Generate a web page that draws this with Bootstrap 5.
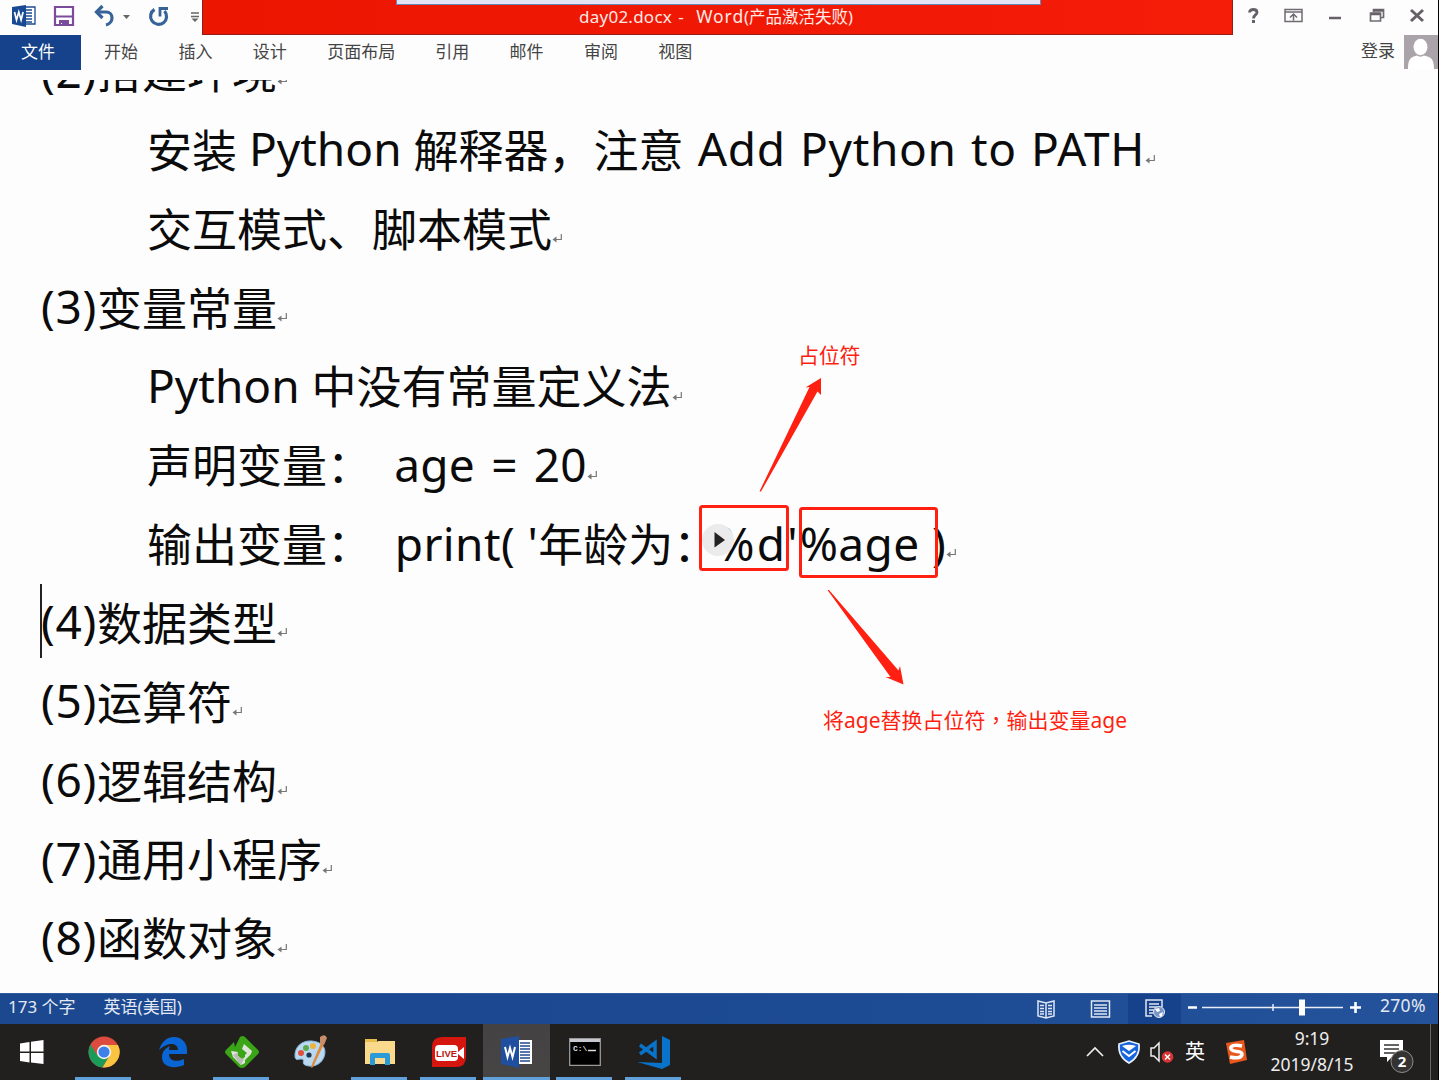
<!DOCTYPE html>
<html lang="zh-CN">
<head>
<meta charset="utf-8">
<title>day02.docx - Word</title>
<link rel="stylesheet" href="https://cdn.jsdelivr.net/npm/bootstrap@5.3.0/dist/css/bootstrap.min.css">
<style>
body{width:1439px;height:1080px;overflow:hidden;background:#fdfdfd;font-family:"Noto Sans","Noto Sans CJK SC",sans-serif;font-size:17px;line-height:1;color:#444}
svg{display:block;flex:none}
.app{width:1439px;height:1080px;border-right:1px solid #000}
.topbar{height:35px}
.quick{width:202px;padding-bottom:4px}
.title-strip{width:1031px;background:linear-gradient(90deg,#eb1500,#f51c08);border:1px solid #8f2017;border-top:0;color:#ffe9e4;font-size:16.5px;padding-top:8px;padding-left:376px;white-space:pre}
.title-strip .fname{font-size:17px;letter-spacing:.25px;word-spacing:1.5px}
.title-strip .appname{font-size:17.5px;letter-spacing:.9px}
.title-strip .share{left:193px;top:0;width:645px;height:5px;background:#e4e4f4;border:1px solid #6b86b8;border-top:0}
.winbtns{padding-left:14px;padding-top:7px}
.ribbon{height:35px}
.file-tab{width:81px;height:35px;background:#15428b;color:#fff;padding:8px 0 0 21px}
.rtab{width:74.4px;padding-top:8px;white-space:nowrap}
.rtab.wide{width:108px}
.tabs{padding-left:23px}
.signin{padding:7px 9px 0 0}
.sheet{height:913px;margin-top:10px;padding-left:41px}
.ln{height:78.85px;line-height:78.85px;white-space:pre;color:#0b0b0b;font-size:45px;display:flex;align-items:center}
.ln.first{margin-top:-47px}
.ln.in{padding-left:106px}
.ln .la,.ln .num{font-size:46px;margin-top:-5px}
.ln .num{width:56px;letter-spacing:.7px}
.ln .mk{margin-top:17px}
.ln .add{letter-spacing:.7px;word-spacing:1.5px}
.ln .assign{margin-left:-10px;letter-spacing:.2px;word-spacing:4px}
.ln .call{margin-left:-2px;letter-spacing:.4px}
.ln .fmt{margin-left:-2px;letter-spacing:2.2px}
.ln .arg{letter-spacing:.4px}
.caret{left:40px;top:584px;width:1.5px;height:74px;background:#222}
.note{color:#ff1f10;font-size:21px;white-space:pre;line-height:24px}
.n1{left:798px;top:343px;letter-spacing:-.3px}.n2{left:823px;top:707px}
.note i{font-style:normal;font-family:"Noto Sans CJK TC",sans-serif}
.status{height:31px;background:linear-gradient(90deg,#1b488f,#1c4a93 60%,#24539b);color:#e4e9f4;border-top:1px solid #315c9d}
.status span{margin-top:-6px}
.status .view-on{width:53px;height:30px;background:#15428b}
.zoomv{width:73px;padding-left:15px;font-size:17.5px;letter-spacing:.3px}
.taskbar{height:56px;background:#22201f}
.tb{width:69px;height:56px;position:relative;display:flex;justify-content:center;align-items:center}
.tb.start{padding-right:6px}
.tb.on::after{content:"";position:absolute;left:6px;right:7px;bottom:0;height:3px;background:#60a1dc}
.tb.act{background:linear-gradient(180deg,#444243,#474544);width:67px}
.tb.act::after{left:0;right:0}
.ime{font-size:20px;margin-left:11px}
.sogou{margin-left:19px}
.clock{line-height:26px;font-size:17.5px;color:#eee;margin:-2px 0 0 22px;width:84px}
.bell{margin:10px 0 0 25px}
.peek{width:1px;height:56px;background:#666;margin-left:15px;margin-right:7px}
</style>
<script src="https://cdn.jsdelivr.net/npm/bootstrap@5.3.0/dist/js/bootstrap.bundle.min.js"></script>
</head>
<body>
<svg width="0" height="0" class="position-absolute"><defs>
<symbol id="ret" viewBox="0 0 11 11"><path d="M9.300 1v5.500H2.500" fill="none" stroke="#777" stroke-width="1.200"/><path d="M0.500 6.500L4.500 3.500V9.500Z" fill="#777"/></symbol>
</defs></svg>
<div class="app d-flex flex-column position-relative">
 <header class="topbar d-flex">
  <div class="quick d-flex align-items-center">
   <svg class="ms-2 ps-1" width="28" height="24" viewBox="0 0 24 24"><path d="M12 3h11v17H12z" fill="#fff" stroke="#1b4a93" stroke-width="1.300"/><path d="M14 6h6M14 9h6M14 12h6M14 15h6M14 18h6" stroke="#1b4a93" stroke-width="1.400"/><path d="M0 3L14 1v22L0 20z" fill="#174a93"/><path d="M2.500 8l2 8 2.300-8 2.300 8 2-8" fill="none" stroke="#fff" stroke-width="1.700"/></svg>
   <svg class="ms-3" width="24" height="22" viewBox="0 0 24 22"><path d="M3 2h18v18H3z" fill="#fff" stroke="#7b4c9b" stroke-width="2.200"/><path d="M3 11.500h18" stroke="#7b4c9b" stroke-width="2"/><path d="M7 15h10v6h-7v-3H9v3H7z" fill="#7b4c9b"/></svg>
   <svg class="ms-3" width="40" height="24" viewBox="0 0 40 24"><path d="M5 8h9c8 0 8 11 0 13" fill="none" stroke="#376399" stroke-width="3.200"/><path d="M10.500 2L4.500 8l6 6" fill="none" stroke="#376399" stroke-width="3.200"/><path d="M31 11h7l-3.500 4z" fill="#666"/></svg>
   <svg class="ms-3" width="22" height="24" viewBox="0 0 22 24"><path d="M6.500 5.500A8 8 0 1 0 16.500 7" fill="none" stroke="#376399" stroke-width="3.200"/><path d="M12 12.500V4.500h8" fill="none" stroke="#376399" stroke-width="2.800"/></svg>
   <svg class="ms-3 ps-1" width="14" height="14" viewBox="0 0 10 14"><path d="M1 4h8M1 7.500h8" stroke="#666" stroke-width="1.300"/><path d="M1.500 9.500h7L5 13z" fill="#666"/></svg>
  </div>
  <div class="title-strip position-relative"><div class="share position-absolute"></div><span class="fname">day02.docx -  </span><span class="appname">Word</span>(产品激活失败)</div>
  <div class="winbtns">
   <svg width="180" height="20" viewBox="0 0 180 20"><path d="M2.500 5.500C2.500 1.500 10 1.500 10 5.500c0 2.500-3.500 2.500-3.500 6" fill="none" stroke="#666168" stroke-width="2.800"/><path d="M5 13h3v3H5z" fill="#666168"/><g fill="none" stroke="#706b72" stroke-width="1.500"><path d="M38 2.500h17v12H38zM38 5h17M46.500 13.500V7.500M43 10.500l3.500-3.500 3.500 3.500"/><path d="M126.500 5V2.500h10v8H134M123.500 6h10v8h-10z" stroke-width="1.700"/></g><path d="M127 3.500h9M124 7h9M82 11h12" stroke="#666168" stroke-width="2.500"/><path d="M164 3l12 11M176 3l-12 11" stroke="#666168" stroke-width="3"/></svg>
  </div>
 </header>
 <nav class="ribbon d-flex">
  <div class="file-tab">文件</div>
  <div class="tabs d-flex"><div class="rtab">开始</div><div class="rtab">插入</div><div class="rtab">设计</div><div class="rtab wide">页面布局</div><div class="rtab">引用</div><div class="rtab">邮件</div><div class="rtab">审阅</div><div class="rtab">视图</div></div>
  <div class="d-flex ms-auto"><span class="signin">登录</span><svg width="34" height="34" viewBox="0 0 34 34"><path d="M0 0h34v34H0z" fill="#aaa3aa"/><ellipse cx="16.500" cy="12" rx="7" ry="8.300" fill="#fff"/><path d="M4 34c0-9 2-12 9-13.500 2 1.500 5 1.500 7 0C28 22 30 25 30 34z" fill="#fff"/></svg></div>
 </nav>
 <main class="sheet overflow-hidden">
  <div class="ln first"><span class="num">(2)</span>搭建环境<svg class="mk" width="11" height="11"><use href="#ret"/></svg></div>
  <div class="ln in">安装<span class="la"> Python </span>解释器，注意<span class="la add"> Add Python to PATH</span><svg class="mk" width="11" height="11"><use href="#ret"/></svg></div>
  <div class="ln in">交互模式、脚本模式<svg class="mk" width="11" height="11"><use href="#ret"/></svg></div>
  <div class="ln"><span class="num">(3)</span>变量常量<svg class="mk" width="11" height="11"><use href="#ret"/></svg></div>
  <div class="ln in"><span class="la">Python </span>中没有常量定义法<svg class="mk" width="11" height="11"><use href="#ret"/></svg></div>
  <div class="ln in">声明变量：<span class="la assign">  age = 20</span><svg class="mk" width="11" height="11"><use href="#ret"/></svg></div>
  <div class="ln in">输出变量：<span class="la call">  print( '</span>年龄为：<span class="la fmt">%d'</span><span class="la arg">%age )</span><svg class="mk" width="11" height="11"><use href="#ret"/></svg></div>
  <div class="ln"><span class="num">(4)</span>数据类型<svg class="mk" width="11" height="11"><use href="#ret"/></svg></div>
  <div class="ln"><span class="num">(5)</span>运算符<svg class="mk" width="11" height="11"><use href="#ret"/></svg></div>
  <div class="ln"><span class="num">(6)</span>逻辑结构<svg class="mk" width="11" height="11"><use href="#ret"/></svg></div>
  <div class="ln"><span class="num">(7)</span>通用小程序<svg class="mk" width="11" height="11"><use href="#ret"/></svg></div>
  <div class="ln"><span class="num">(8)</span>函数对象<svg class="mk" width="11" height="11"><use href="#ret"/></svg></div>
 </main>
 <footer class="status d-flex align-items-center">
  <span class="ps-2">173 个字</span><span class="ms-4 ps-1">英语(美国)</span>
  <div class="d-flex align-items-center ms-auto">
   <svg width="92" height="24" viewBox="0 0 92 24"><g fill="none" stroke="#dfe6f3" stroke-width="1.500"><path d="M2 4l8 2 8-2v15l-8 2-8-2zM10 6v15M4 8.500h4M4 11.500h4M4 14.500h4M4 17h4M12 8.500h4M12 11.500h4M12 14.500h4M12 17h4"/><path d="M55.500 4h18v16h-18zM58 8h13M58 11h13M58 14h13M58 17h13"/></g></svg>
   <div class="view-on d-flex align-items-center justify-content-center"><svg width="22" height="22" viewBox="0 0 22 22"><path d="M8 18H2V2h16v7M5 6h10M5 9h8M5 12h5M5 15h4" fill="none" stroke="#dfe6f3" stroke-width="1.500"/><circle cx="15" cy="14" r="5.500" fill="#7794c4" stroke="#e5ebf5"/><path d="M11 11l4-1 1 3-3 1zM15 16l4-2-1 4-2 1z" fill="#fff"/></svg></div>
   <svg width="184" height="28" viewBox="0 2 184 24"><path d="M7 12.500h9M169 12.500h11M174.500 7v11" stroke="#fff" stroke-width="2.600"/><path d="M21 12.500h141M92 9v7" stroke="#e8edf6" stroke-width="1.500"/><path d="M118 4.500h6v16h-6z" fill="#fff"/></svg>
   <span class="zoomv">270%</span>
  </div>
 </footer>
 <div class="taskbar d-flex">
  <div class="tb start"><svg width="24" height="24" viewBox="0 0 24 24" fill="#fff"><path d="M0 3.500L9.500 2v9.500H0zM11 1.800L23.500 0v11.500H11zM0 13h9.500v9.500L0 21zM11 13h12.500v11L11 22.500z"/></svg></div>
  <div class="tb on"><svg width="32" height="32" viewBox="0 0 32 32"><circle cx="16" cy="16" r="15.500" fill="#dc4b3e"/><path d="M2.500 8.500A15.500 15.500 0 0 0 14.500 31.500L21 20 16 16 9 19z" fill="#1a9c58"/><path d="M16 9h13.900A15.500 15.500 0 0 1 14.500 31.500L22 19z" fill="#f9c440"/><circle cx="16" cy="16" r="7.200" fill="#f3f3f3"/><circle cx="16" cy="16" r="5.600" fill="#3f80e8"/></svg></div>
  <div class="tb"><svg width="30" height="32" viewBox="0 0 30 32"><path d="M1 14C4 5 9 1 16 1c8 0 13 6 13 13v4H11c0 8 9 8 15 5v6c-9 4-22 3-22-8 0-6 4-9 8-11-1 2-1 3-1 4h9c0-7-9-9-19 0z" fill="#0965d4"/></svg></div>
  <div class="tb on"><svg width="34" height="34" viewBox="0 0 34 34"><path d="M17 1q2 0 3 1l13 13q2 2 0 4L20 32q-3 2-6 0L1 19q-2-2 0-4L9 7l1 5 5-10z" fill="#3aa516"/><path d="M6 16l7 1v4l4 3 3-2v6l-4 2-8-8z" fill="#e5e5df"/><path d="M8 20l5-3v4l4 3 3-2-4 8z" fill="#b9beb5"/><path d="M19 9l8 7-1 3-6 6v-5l2-2-5-4z" fill="#dfe4da"/></svg></div>
  <div class="tb"><svg width="34" height="34" viewBox="0 0 34 34"><path d="M1 22C0 12 8 5 18 6c11 1 15 8 12 16-3 8-12 11-19 8-4-2 1-6-4-6-3 0-5 2-6-2z" fill="#b8d9f1" stroke="#88b4dc"/><circle cx="7" cy="18" r="3" fill="#df513f"/><circle cx="12" cy="13" r="3" fill="#5daa4d"/><circle cx="19" cy="11" r="3" fill="#edb33b"/><circle cx="15" cy="20" r="2.600" fill="#20364d"/><path d="M27 8l3 1-11 23-2 1 1-4z" fill="#df8a3c"/><path d="M26 2q5-4 7 1l-3 7-4-1z" fill="#c88e6a"/></svg></div>
  <div class="tb on"><svg width="32" height="28" viewBox="0 0 32 28"><path d="M1 1h12v4H1z" fill="#e9bd4c"/><path d="M1 4h12l1-1h17v23H1z" fill="#fbd98c"/><path d="M6 27V17q0-2 2-2h16q2 0 2 2v10h-5v-7H11v7z" fill="#2b9bd8"/></svg></div>
  <div class="tb on"><svg width="34" height="30" viewBox="0 0 34 30"><path d="M10 0h24v20q0 10-10 10H0V10Q0 0 10 0z" fill="#d5160f"/><rect x="3" y="8" width="23" height="16" rx="4" fill="#fff"/><path d="M26 15l6-5v12l-6-5z" fill="#fff"/><text x="14.500" y="20" text-anchor="middle" font-family="Liberation Sans" font-size="9.500" font-weight="700" fill="#ba1611">LIVE</text></svg></div>
  <div class="tb on act"><svg width="32" height="32" viewBox="0 0 32 32"><path d="M17 4h14v24H17z" fill="#fff"/><path d="M19 7h10M19 10h10M19 13h10M19 16h10M19 19h10M19 22h10M19 25h10" stroke="#234a91" stroke-width="1.300"/><path d="M0 3L18 0v32L0 28z" fill="#204f9f"/><path d="M4 11l2.500 10L9 12l2.500 9L14 11" fill="none" stroke="#fff" stroke-width="2"/></svg></div>
  <div class="tb on"><svg width="32" height="28" viewBox="0 0 32 28"><path d="M.7.700h30.600v26.600H.7z" fill="#000" stroke="#999" stroke-width="1.300"/><path d="M1 1h30v3H1z" fill="#c8c8d0"/><text x="4" y="13" font-family="Liberation Mono" font-size="8" font-weight="700" fill="#ddd">C:\</text><path d="M19 12.500h8" stroke="#ddd" stroke-width="1.500"/></svg></div>
  <div class="tb on"><svg width="34" height="34" viewBox="0 0 34 34"><path d="M25 1l8 4v25l-8 4L0 27l25 1z" fill="#0873c9"/><path d="M3 10l15 11V8L3 19" fill="none" stroke="#0873c9" stroke-width="3.500"/></svg></div>
  <div class="d-flex align-items-center ms-auto">
   <svg width="88" height="30" viewBox="0 0 88 30"><path d="M1 19l8-8 8 8" fill="none" stroke="#eee" stroke-width="1.700"/><path d="M33 7l10-3 10 3c1 9-3 15-10 19-7-4-11-10-10-19z" fill="#1765dc" stroke="#eaf3ff" stroke-width="1.600"/><path d="M36 9q7-2.500 14 0l-7 5z" fill="#fff"/><path d="M36.500 14l6.500 5 6.500-5" fill="none" stroke="#fff" stroke-width="1.800"/><path d="M65 11h3l5-5v18l-5-5h-3z" fill="none" stroke="#eee" stroke-width="1.500"/><circle cx="81.500" cy="20" r="5.800" fill="#d93434"/><path d="M79 17.500l5 5M84 17.500l-5 5" stroke="#fff" stroke-width="1.500"/></svg>
   <span class="text-white ime">英</span>
   <svg class="sogou" width="24" height="24" viewBox="0 0 24 24"><path d="M2 3L20 0l3 20-17 4z" fill="#e9571c"/><path d="M18 6C10 4 6 6 7 9c2 4 11 1 11 5 0 5-8 4-12 3" fill="none" stroke="#fff" stroke-width="3.500"/></svg>
   <div class="clock text-center"><div>9:19</div><div>2019/8/15</div></div>
   <svg class="bell" width="36" height="36" viewBox="0 0 36 36"><path d="M1 1h23v17H13l-5 5v-5H1z" fill="#fff"/><path d="M5 6h15M5 10h15M5 14h11" stroke="#333" stroke-width="1.400"/><circle cx="23" cy="22.500" r="11" fill="#343332" stroke="#8c8c8c"/><text x="23" y="28" text-anchor="middle" font-family="Noto Sans" font-weight="700" font-size="15" fill="#fff">2</text></svg>
   <div class="peek"></div>
  </div>
 </div>
 <div class="caret position-absolute"></div>
 <svg class="position-absolute top-0 start-0" width="1438" height="992"><circle cx="718" cy="540" r="16" fill="#ebebeb"/><path d="M714.500 532v15.500l10.500-7.500z" fill="#222"/><g fill="none" stroke="#ff2012" stroke-width="3"><rect x="700.500" y="506.500" width="87" height="63" rx="2"/><rect x="800.500" y="508.500" width="136" height="68" rx="2"/></g><g fill="#ff2012"><path d="M759.500 491.500L809.500 387 805.500 387.500 821 378V395L817.500 391.500 761 491.500z"/><path d="M827.500 590L890.500 677 885.500 677 903.500 684.500 900 666 898.500 670.500 829 590z"/></g></svg>
 <div class="note n1 position-absolute">占位符</div>
 <div class="note n2 position-absolute">将age替换占位符<i lang="zh-TW">，</i>输出变量age</div>
</div>
</body>
</html>
